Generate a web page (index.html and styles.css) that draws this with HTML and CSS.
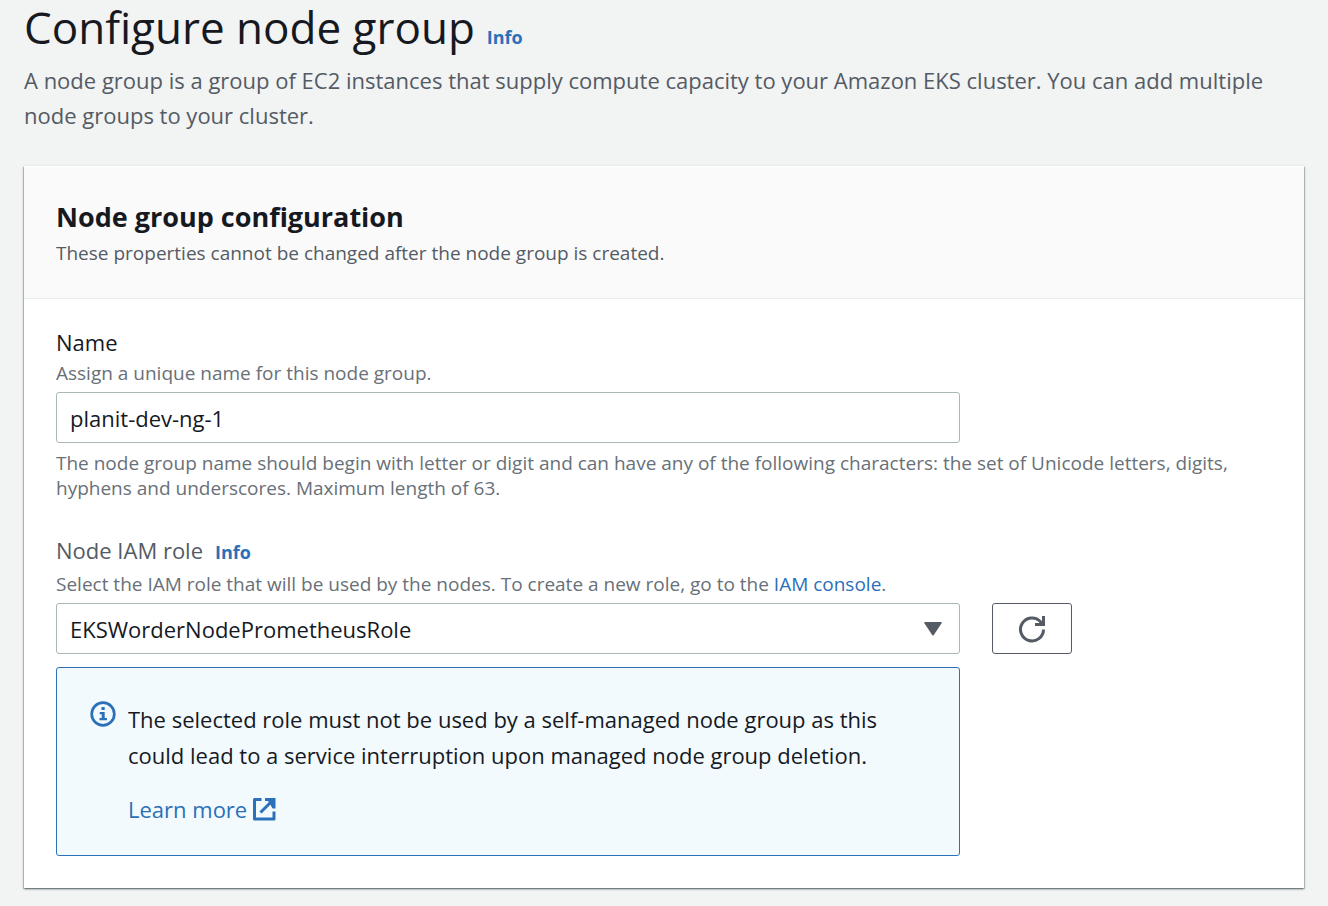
FILE: index.html
```html
<!DOCTYPE html>
<html lang="en">
<head>
<meta charset="utf-8">
<title>Configure node group</title>
<link rel="stylesheet" href="styles.css">
</head>
<body>
<main class="page">
  <header class="page-header">
    <div class="title-row">
      <h1 class="page-title">Configure node group</h1>
      <a class="info-link" href="#">Info</a>
    </div>
    <p class="page-description">A node group is a group of EC2 instances that supply compute capacity to your Amazon EKS cluster. You can add multiple node groups to your cluster.</p>
  </header>
  <section class="card">
    <header class="card-header">
      <h2 class="card-title">Node group configuration</h2>
      <p class="card-description">These properties cannot be changed after the node group is created.</p>
    </header>
    <form class="card-body">
      <div class="field">
        <label class="field-label" for="name">Name</label>
        <p class="hint">Assign a unique name for this node group.</p>
        <input class="control text-input" id="name" type="text" value="planit-dev-ng-1">
        <p class="constraint">The node group name should begin with letter or digit and can have any of the following characters: the set of Unicode letters, digits, hyphens and underscores. Maximum length of 63.</p>
      </div>
      <div class="field">
        <div class="label-row">
          <label class="field-label muted" for="role">Node IAM role</label>
          <a class="info-link" href="#">Info</a>
        </div>
        <p class="hint">Select the IAM role that will be used by the nodes. To create a new role, go to the <a class="link" href="#">IAM console</a>.</p>
        <div class="control-grid">
          <div class="select-wrap">
            <select class="control select" id="role"><option>EKSWorderNodePrometheusRole</option></select>
            <svg class="caret" viewBox="0 0 18 14" aria-hidden="true"><path d="M1 0h16q1.500 0 .6 1.200L9.800 13q-.8 1-1.600 0L.4 1.200Q-.5 0 1 0z" fill="#545b64"/></svg>
          </div>
          <button class="refresh" type="button" aria-label="Refresh roles">
            <svg class="refresh-icon" viewBox="0 0 28 28" fill="none" stroke="#545b64" stroke-width="3" aria-hidden="true"><path d="M25.500 14.500A11.500 11.500 0 1 1 22.500 6.700L24.500 9M25.500 1v9M17 9.500h10"/></svg>
          </button>
        </div>
        <div class="alert">
          <svg class="alert-icon" viewBox="0 0 26 26" aria-hidden="true"><circle cx="13" cy="13" r="11.300" fill="none" stroke="#2b70b8" stroke-width="2.700"/><path d="M11.500 6h3.200v3h-3.200zM9.700 11h5v6H17v2.200H9.500V17h2.200v-3.800h-2z" fill="#2b70b8"/></svg>
          <div class="alert-content">
            <p class="alert-text">The selected role must not be used by a self-managed node group as this could lead to a service interruption upon managed node group deletion.</p>
            <a class="link learn-more" href="#">Learn more
              <svg class="external-icon" viewBox="0 0 24 24" fill="none" stroke="currentColor" stroke-width="3" aria-hidden="true"><path d="M9.500 2.500H2.500v19.500H22V14.500M8.500 15.500 20 4" stroke-linejoin="round"/><path d="M13 1h10.500v10.500h-3L18 7l-2-3h-3z" fill="currentColor" stroke="none"/></svg>
            </a>
          </div>
        </div>
      </div>
    </form>
  </section>
</main>
</body>
</html>
```
FILE: styles.css
```css
* { box-sizing: border-box; }
body { margin: 0; background: #f2f3f3; color: #16191f; font-family: "Open Sans", "Noto Sans", sans-serif; font-weight: 500; }
h1, h2, p { margin: 0; }
.page { padding: 0 24px 18px; }
.page-header { margin-bottom: 33px; }
.title-row { display: flex; align-items: baseline; gap: 12px; }
.page-title { font-size: 44px; line-height: 54px; font-weight: 500; }
.info-link { color: #2b70b8; font-size: 18px; font-weight: 700; line-height: 26px; text-decoration: none; }
.page-description { color: #545b64; font-size: 22px; line-height: 35px; margin-top: 9px; }
.card { background: #fff; border-top: 1px solid #fff; box-shadow: 0 1px 2px rgba(0, 28, 36, .5), 1px 1px 1px rgba(0, 28, 36, .15), -1px 1px 1px rgba(0, 28, 36, .15); }
.card-header { background: #fafafa; border-bottom: 1px solid #eaeded; padding: 32px; }
.card-title { font-size: 27px; line-height: 36px; font-weight: 700; }
.card-description { color: #545b64; font-size: 19px; line-height: 26px; margin-top: 5px; }
.card-body { padding: 27px 32px 32px; display: grid; gap: 33px; }
.field-label { display: block; font-size: 22px; line-height: 32px; margin-bottom: 3px; }
.muted { color: #545b64; }
.hint, .constraint { color: #687078; font-size: 19px; line-height: 25px; }
.hint { margin-bottom: 6px; }
.constraint { margin-top: 8px; }
.control { display: block; width: 100%; height: 51px; border: 1px solid #aab7b8; border-radius: 3px; background: #fff; color: #16191f; font: inherit; font-size: 22px; padding: 0 13px; }
.text-input { width: calc(75% - 8px); }
.label-row { display: flex; align-items: baseline; gap: 12px; margin-bottom: 3px; }
.link { color: #2b70b8; text-decoration: none; }
.control-grid { display: flex; gap: 32px; }
.select-wrap { position: relative; width: calc(75% - 8px); }
.select { appearance: none; }
.caret { position: absolute; right: 18px; top: 19px; width: 18px; height: 14px; }
.refresh { display: grid; place-items: center; width: 80px; height: 51px; border: 1px solid #545b64; border-radius: 3px; background: #fff; padding: 0; }
.refresh-icon { width: 28px; height: 28px; }
.alert { display: flex; gap: 12px; width: calc(75% - 8px); margin-top: 13px; border: 1px solid #2b70b8; border-radius: 3px; background: #f2fafd; padding: 33px 33px 28px; }
.alert-icon { flex: none; width: 26px; height: 26px; }
.alert-text { font-size: 22px; line-height: 36px; }
.learn-more { display: inline-flex; align-items: center; gap: 5px; margin-top: 18px; font-size: 22px; line-height: 36px; }
.external-icon { width: 24px; height: 24px; }
```
